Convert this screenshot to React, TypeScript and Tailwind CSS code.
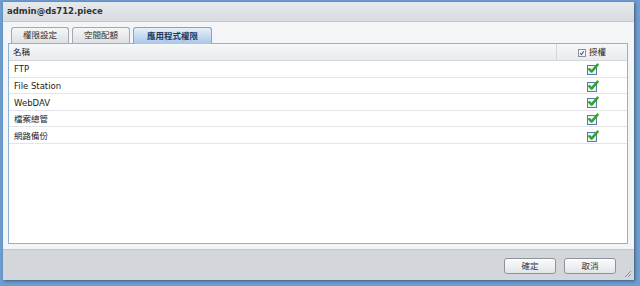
import React from 'react'

const apps = ['FTP', 'File Station', 'WebDAV', '檔案總管', '網路備份']

const font = { fontFamily: '"DejaVu Sans", "Noto Sans CJK TC", sans-serif' }

function GreenCheck() {
  return (
    <svg width="12" height="12" viewBox="0 0 12 12">
      <rect x="0.5" y="2.5" width="9" height="9" fill="#eef3f8" stroke="#5a7aa6" />
      <path d="M2.3 6.2 L4.6 8.6 L10.6 1.6" fill="none" stroke="#2ea52e" strokeWidth="2.4" strokeLinecap="round" strokeLinejoin="round" />
    </svg>
  )
}

function SmallCheck() {
  return (
    <svg width="8" height="8" viewBox="0 0 8 8">
      <rect x="0.5" y="0.5" width="7" height="7" fill="#f4f5f7" stroke="#8a9099" />
      <path d="M2.2 4.2 L3.5 5.6 L5.8 2.2" fill="none" stroke="#3d5f9a" strokeWidth="1.1" />
    </svg>
  )
}

function Tab({ label, active }: { label: string; active?: boolean }) {
  if (active) {
    return (
      <div className="h-[17px] w-[79px] flex items-center justify-center rounded-t-[3px] border border-b-0 border-[#7ea6d0] bg-gradient-to-b from-[#e6f0fa] to-[#a9c7e6] text-[8.5px] font-bold text-[#1e3a60] -mb-px z-10">
        {label}
      </div>
    )
  }
  return (
    <div className="h-[16px] w-[58px] flex items-center justify-center rounded-t-[3px] border border-b-0 border-[#a3a9b0] bg-gradient-to-b from-[#f5f6f7] to-[#dde0e4] text-[8.5px] text-[#333]">
      {label}
    </div>
  )
}

function Button({ label }: { label: string }) {
  return (
    <div className="h-[16px] w-[52px] flex items-center justify-center rounded-[3px] border border-[#8d939a] bg-gradient-to-b from-[#fbfbfc] to-[#e2e5e8] text-[8.5px] text-[#333] shadow-[inset_0_1px_0_#ffffff]">
      {label}
    </div>
  )
}

export default function App() {
  return (
    <div className="w-[640px] h-[286px] bg-[#6e9dd0] pt-[2px] pl-[3px] pr-[6px] pb-[6px]" style={font}>
      <div className="w-[631px] h-[278px] flex flex-col bg-[#f4f5f6] shadow-[1px_1px_3px_rgba(0,0,0,0.45)]">
        {/* Title */}
        <div className="h-[20px] shrink-0 flex items-center pl-[4px] bg-gradient-to-b from-[#e6e9ec] to-[#d8dce0] border-b border-[#c4c8cd] text-[8.5px] font-bold text-[#333]">
          admin@ds712.piece
        </div>

        {/* Body */}
        <div className="flex-1 flex flex-col pt-[5px] pl-[5px] pr-[6px]">
          <div className="flex items-end gap-[3px] pl-[3px] h-[16px]">
            <Tab label="權限設定" />
            <Tab label="空間配額" />
            <Tab label="應用程式權限" active />
          </div>
          <div className="h-[201px] border border-[#8db3d9] bg-white flex flex-col">
            <div className="h-[17px] shrink-0 flex bg-gradient-to-b from-[#f6f7f8] to-[#e9ebee] border-b border-[#d3d6da] text-[8.5px] text-[#222]">
              <div className="flex-1 flex items-center pl-[4px] pt-px border-r border-[#d3d6da]">名稱</div>
              <div className="w-[70px] flex items-center justify-center gap-[3px] pt-px">
                <SmallCheck />
                <span>授權</span>
              </div>
            </div>
            {apps.map((name) => (
              <div key={name} className="h-[16.6px] shrink-0 flex border-b border-[#e3e5e8] text-[8.5px] text-[#222]">
                <div className="flex-1 flex items-center pl-[5px] pt-[2px]">{name}</div>
                <div className="w-[70px] flex items-center justify-center pl-[2px] pt-px">
                  <GreenCheck />
                </div>
              </div>
            ))}
          </div>
        </div>

        {/* Footer */}
        <div className="relative h-[31px] shrink-0 flex justify-end gap-[8px] pt-[8px] pr-[18px] bg-[#d3d7db] border-t border-[#c2c6cb]">
          <Button label="確定" />
          <Button label="取消" />
          <svg className="absolute right-[2px] bottom-[2px]" width="9" height="9" viewBox="0 0 9 9">
            <path d="M8 2 L2 8 M8 5 L5 8" stroke="#8a8f95" strokeWidth="1" />
          </svg>
        </div>
      </div>
    </div>
  )
}
